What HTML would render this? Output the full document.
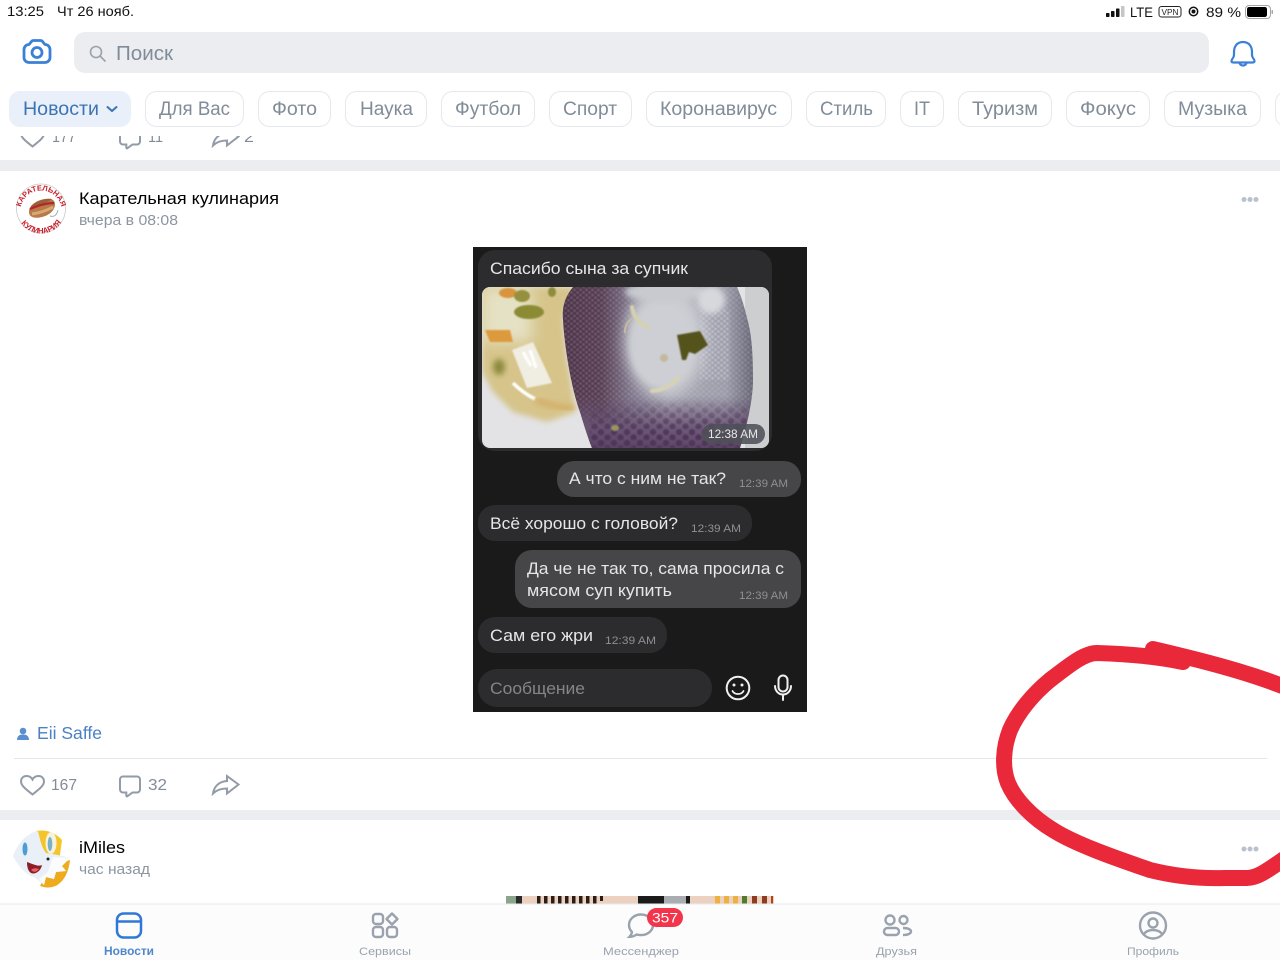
<!DOCTYPE html>
<html lang="ru"><head><meta charset="utf-8"><title>Новости</title>
<style>
html,body{margin:0;padding:0;background:#fff;width:1280px;height:960px;overflow:hidden}
svg{display:block;filter:blur(.3px)}
text{font-family:"Liberation Sans","Noto Sans CJK JP",sans-serif}
.chip{font-size:19px;fill:#818c99}
.chipbox{fill:#fff;stroke:#e6e8eb;stroke-width:1}
.st{font-size:14px;fill:#111}
.chat{font-size:17px;fill:#e6e6e6}
.tm{font-size:11px;fill:#8f8f92}
.sub{font-size:15px;fill:#8c96a2}
.name{font-size:17px;fill:#000}
.ct{font-size:16px;fill:#828c98}
.tab{font-size:11px;fill:#99a2ad}
.ic{fill:none;stroke:#929ba6;stroke-width:2}
.tic{fill:none;stroke:#99a2ad;stroke-width:2.4}
</style></head><body>
<svg width="1280" height="960" viewBox="0 0 1280 960" xmlns="http://www.w3.org/2000/svg">
<defs>
<filter id="b1" x="-30%" y="-30%" width="160%" height="160%"><feGaussianBlur stdDeviation="0.7"/></filter>
<filter id="b3" x="-30%" y="-30%" width="160%" height="160%"><feGaussianBlur stdDeviation="3"/></filter>
<filter id="b6" x="-40%" y="-40%" width="180%" height="180%"><feGaussianBlur stdDeviation="7"/></filter>
<clipPath id="ph"><rect x="482" y="287" width="287" height="161" rx="8"/></clipPath>
<clipPath id="av1"><circle cx="41" cy="208.500" r="24.500"/></clipPath>
<clipPath id="sp"><path d="M573 287C564 298 562 308 563 320C564 340 570 385 580 412C584 425 588 438 592 448H740C747 425 753 400 753 380C753 355 752 335 747 318C744 305 741 296 737 287Z"/></clipPath>
<linearGradient id="spH" x1="563" x2="755" y1="0" y2="0" gradientUnits="userSpaceOnUse">
<stop offset="0" stop-color="#4a2f44"/><stop offset=".2" stop-color="#54394f"/><stop offset=".36" stop-color="#7d748a"/><stop offset=".55" stop-color="#a6a6b2"/><stop offset=".85" stop-color="#9a9aa8"/><stop offset="1" stop-color="#605e6e"/>
</linearGradient>
<linearGradient id="spV" x1="0" x2="0" y1="395" y2="448" gradientUnits="userSpaceOnUse">
<stop offset="0" stop-color="#6a5574" stop-opacity="0"/><stop offset=".6" stop-color="#6a5574" stop-opacity=".9"/><stop offset="1" stop-color="#5c4565"/>
</linearGradient>
<linearGradient id="fadeV" x1="0" x2="0" y1="400" y2="435" gradientUnits="userSpaceOnUse"><stop offset="0" stop-color="#000"/><stop offset="1" stop-color="#fff"/></linearGradient>
<mask id="mB" maskUnits="userSpaceOnUse" x="555" y="287" width="205" height="161"><rect x="555" y="287" width="205" height="161" fill="url(#fadeV)"/></mask>
<pattern id="dots" width="6" height="5.200" patternUnits="userSpaceOnUse"><circle cx="1.500" cy="1.300" r="1.300" fill="#e4e4ec"/><circle cx="4.500" cy="3.900" r="1.300" fill="#e4e4ec"/></pattern>
<pattern id="dotsB" width="13" height="11" patternUnits="userSpaceOnUse"><circle cx="3" cy="3" r="3.200" fill="#50345a"/><circle cx="9.500" cy="8.500" r="3.200" fill="#50345a"/></pattern>
<path id="arcT" d="M20.500 211a20.500 20.500 0 0 1 41 0"/>
<path id="arcB" d="M17 210a24 23.500 0 0 0 48 0"/>
</defs>
<rect width="1280" height="960" fill="#fff"/>

<!-- clipped previous post actions -->
<g transform="translate(0,-648)">
<path class="ic" d="M32.500 794.500C27 790 21 786 21 781.500C21 778 23.500 776 26.500 776C29 776 31.300 777.300 32.500 779.500C33.700 777.300 36 776 38.500 776C41.500 776 44 778 44 781.500C44 786 38 790 32.500 794.500Z"/>
<path class="ic" d="M123 776.500h14a3 3 0 0 1 3 3v10a3 3 0 0 1-3 3h-4.500l-5 3.700c-.7.4-1.200 0-1.200-.7v-3h-3.300a3 3 0 0 1-3-3v-10a3 3 0 0 1 3-3z"/>
<path class="ic" d="M227 776l11.500 8.500-11.500 9v-5c-5 0-10 1-14 5c1-7 6-12 14-12.500z"/>
<text class="ct" x="52" y="790" textLength="24" lengthAdjust="spacingAndGlyphs">177</text>
<text class="ct" x="148" y="790" textLength="15" lengthAdjust="spacingAndGlyphs">11</text>
<text class="ct" x="244" y="790" textLength="10" lengthAdjust="spacingAndGlyphs">2</text>
</g>

<!-- header -->
<rect width="1280" height="136" fill="#fff"/>
<text class="st" x="7" y="16" textLength="37" lengthAdjust="spacingAndGlyphs">13:25</text>
<text class="st" x="57" y="16" textLength="77" lengthAdjust="spacingAndGlyphs">Чт 26 нояб.</text>
<g fill="#111">
<rect x="1106" y="13" width="3.500" height="4" rx=".7"/><rect x="1111" y="11" width="3.500" height="6" rx=".7"/><rect x="1116" y="8.500" width="3.500" height="8.500" rx=".7"/><rect x="1121" y="6" width="3.500" height="11" rx=".7" fill="#c6c6c8"/>
</g>
<text class="st" x="1130" y="17" textLength="23" lengthAdjust="spacingAndGlyphs">LTE</text>
<rect x="1159" y="6.500" width="22" height="10.500" rx="2.500" fill="none" stroke="#222" stroke-width="1"/>
<text x="1161.500" y="15" font-size="8.500" fill="#222" textLength="17" lengthAdjust="spacingAndGlyphs">VPN</text>
<circle cx="1193.500" cy="11.500" r="4.200" fill="none" stroke="#111" stroke-width="1.500"/><circle cx="1193.500" cy="11.500" r="2" fill="#111"/>
<text class="st" x="1206" y="17" textLength="35" lengthAdjust="spacingAndGlyphs">89 %</text>
<rect x="1245.500" y="5.500" width="25" height="13" rx="3.500" fill="none" stroke="#a6a6a8" stroke-width="1"/>
<rect x="1247" y="7" width="20" height="10" rx="2.200" fill="#000"/>
<rect x="1271.500" y="10" width="1.500" height="4" rx=".7" fill="#a6a6a8"/>

<path d="M29 44.500L31.500 41.500Q32 40.500 33.500 40.500H40.500Q42 40.500 42.500 41.500L45 44.500A5 5 0 0 1 50 49.500V57.500A5 5 0 0 1 45 62.500H29A5 5 0 0 1 24 57.500V49.500A5 5 0 0 1 29 44.500Z" fill="none" stroke="#3a80d8" stroke-width="2.800" stroke-linejoin="round"/>
<circle cx="37" cy="52.500" r="5" fill="none" stroke="#3a80d8" stroke-width="2.800"/>
<rect x="74" y="32" width="1135" height="41" rx="11" fill="#ebedf0"/>
<circle cx="96" cy="52" r="5.500" fill="none" stroke="#99a2ad" stroke-width="1.600"/><path d="M100 56l5 5" stroke="#99a2ad" stroke-width="1.600" stroke-linecap="round"/>
<text x="116" y="60" font-size="20" fill="#818c99" textLength="57" lengthAdjust="spacingAndGlyphs">Поиск</text>
<path d="M1243 42c-6 0-9 4.500-9 10v3c0 3-2.500 4-2.500 6c0 1 .8 1.500 2 1.500h19c1.200 0 2-.5 2-1.500c0-2-2.500-3-2.500-6v-3c0-5.500-3-10-9-10z" fill="none" stroke="#3a80d8" stroke-width="2.200"/>
<path d="M1239.500 62.500a3.500 3 0 0 0 7 0" fill="none" stroke="#3a80d8" stroke-width="2.200"/>

<rect x="9" y="91" width="122" height="36" rx="11" fill="#e9f0f9"/>
<text x="23" y="115" font-size="19" fill="#3c73b4" textLength="76" lengthAdjust="spacingAndGlyphs">Новости</text>
<path d="M107.500 107l4.500 4 4.500-4" fill="none" stroke="#3c73b4" stroke-width="2" stroke-linecap="round" stroke-linejoin="round"/>
<rect class="chipbox" x="145.500" y="91.500" width="98" height="35" rx="11"/><text class="chip" x="159" y="115" textLength="71" lengthAdjust="spacingAndGlyphs">Для Вас</text>
<rect class="chipbox" x="258.500" y="91.500" width="72" height="35" rx="11"/><text class="chip" x="272" y="115" textLength="45" lengthAdjust="spacingAndGlyphs">Фото</text>
<rect class="chipbox" x="345.500" y="91.500" width="81" height="35" rx="11"/><text class="chip" x="360" y="115" textLength="53" lengthAdjust="spacingAndGlyphs">Наука</text>
<rect class="chipbox" x="441.500" y="91.500" width="93" height="35" rx="11"/><text class="chip" x="455" y="115" textLength="66" lengthAdjust="spacingAndGlyphs">Футбол</text>
<rect class="chipbox" x="549.500" y="91.500" width="82" height="35" rx="11"/><text class="chip" x="563" y="115" textLength="54" lengthAdjust="spacingAndGlyphs">Спорт</text>
<rect class="chipbox" x="646.500" y="91.500" width="145" height="35" rx="11"/><text class="chip" x="660" y="115" textLength="117" lengthAdjust="spacingAndGlyphs">Коронавирус</text>
<rect class="chipbox" x="806.500" y="91.500" width="79" height="35" rx="11"/><text class="chip" x="820" y="115" textLength="53" lengthAdjust="spacingAndGlyphs">Стиль</text>
<rect class="chipbox" x="900.500" y="91.500" width="43" height="35" rx="11"/><text class="chip" x="914" y="115" textLength="16" lengthAdjust="spacingAndGlyphs">IT</text>
<rect class="chipbox" x="958.500" y="91.500" width="93" height="35" rx="11"/><text class="chip" x="972" y="115" textLength="66" lengthAdjust="spacingAndGlyphs">Туризм</text>
<rect class="chipbox" x="1066.500" y="91.500" width="83" height="35" rx="11"/><text class="chip" x="1080" y="115" textLength="56" lengthAdjust="spacingAndGlyphs">Фокус</text>
<rect class="chipbox" x="1164.500" y="91.500" width="96" height="35" rx="11"/><text class="chip" x="1178" y="115" textLength="69" lengthAdjust="spacingAndGlyphs">Музыка</text>
<rect class="chipbox" x="1275.500" y="91.500" width="40" height="35" rx="11"/>

<rect x="0" y="160" width="1280" height="11" fill="#ebedf0"/>

<!-- post 1 header -->
<circle cx="41" cy="208.500" r="24.500" fill="#fff" stroke="#c9c9c9" stroke-width=".8"/>
<g clip-path="url(#av1)">
<path d="M29 212C29 205 37 200 45 199C51 198 55 200 55 204C55 210 50 215 42 217C34 219 29 217 29 212Z" fill="#b87a48"/>
<path d="M31 206C37 201 45 198 52 199C49 202 39 205 31 210Z" fill="#9a6038"/>
<path d="M30 209C37 206 45 203 54 203" stroke="#b3262c" stroke-width="2.200" fill="none"/>
<path d="M32 214C39 213 46 211 53 207" stroke="#d9a874" stroke-width="3" fill="none"/>
<path d="M50 216q6 2 8-6" stroke="#aaa" stroke-width="1" fill="none"/>
</g>
<text font-size="7.500" font-weight="bold" fill="#c8202c"><textPath href="#arcT" startOffset="4" textLength="56" lengthAdjust="spacingAndGlyphs">КАРАТЕЛЬНАЯ</textPath></text>
<text font-size="8" font-weight="bold" fill="#c8202c"><textPath href="#arcB" startOffset="14" textLength="47" lengthAdjust="spacingAndGlyphs">КУЛИНАРИЯ</textPath></text>
<text class="name" x="79" y="204" textLength="200" lengthAdjust="spacingAndGlyphs">Карательная кулинария</text>
<text class="sub" x="79" y="225" textLength="99" lengthAdjust="spacingAndGlyphs">вчера в 08:08</text>
<g fill="#b8c1cc"><circle cx="1244" cy="199.500" r="2.500"/><circle cx="1250" cy="199.500" r="2.500"/><circle cx="1256" cy="199.500" r="2.500"/></g>

<!-- chat image -->
<rect x="473" y="247" width="334" height="465" fill="#1a1a1b"/>
<rect x="478" y="250" width="294" height="201" rx="17" fill="#2c2c2e"/>
<text class="chat" x="490" y="274" textLength="198" lengthAdjust="spacingAndGlyphs">Спасибо сына за супчик</text>
<g clip-path="url(#ph)">
<rect x="482" y="287" width="287" height="161" fill="#e3e3e6"/>
<rect x="745" y="287" width="24" height="161" fill="#cdced0"/>
<path d="M482 287H575L563 318L567 358L576 412L547 422L513 412L493 392L482 372Z" fill="#d6c48a" filter="url(#b3)"/>
<rect x="482" y="287" width="50" height="55" fill="#e5e1c4" filter="url(#b6)"/>
<ellipse cx="508" cy="293" rx="9" ry="5" fill="#d9943c" filter="url(#b1)"/>
<ellipse cx="522" cy="296" rx="8" ry="6" fill="#94903e" filter="url(#b1)"/>
<ellipse cx="529" cy="312" rx="15" ry="7" fill="#8b8a35" filter="url(#b1)"/>
<ellipse cx="552" cy="292" rx="4" ry="5" fill="#8f8c3e" filter="url(#b1)"/>
<path d="M485 330H510L513 342L500 342L490 342Z" fill="#dd9a3e" filter="url(#b1)"/>
<ellipse cx="499" cy="367" rx="6" ry="8" fill="#8c8a3e" filter="url(#b3)"/>
<path d="M512 350L533 342L552 383L527 388Z" fill="#f0eee2" filter="url(#b1)"/>
<path d="M523 352l8 14M530 350l6 18" stroke="#fff" stroke-width="3" filter="url(#b1)"/>
<path d="M513 383q10 10 22 16" stroke="#fff" stroke-width="3.500" fill="none" filter="url(#b1)"/>
<path d="M536 400q20 8 38 8" stroke="#d4ae68" stroke-width="6" fill="none" filter="url(#b3)"/>
<g clip-path="url(#sp)">
<rect x="555" y="287" width="205" height="161" fill="url(#spH)"/>
<rect x="555" y="287" width="205" height="161" fill="url(#dots)" opacity=".28" filter="url(#b1)"/>
<rect x="555" y="395" width="205" height="53" fill="url(#spV)"/>
<rect x="590" y="400" width="160" height="48" fill="url(#dotsB)" mask="url(#mB)" filter="url(#b1)"/>
<ellipse cx="665" cy="340" rx="40" ry="56" fill="#cbcdd2" filter="url(#b6)"/>
<ellipse cx="662" cy="345" rx="32" ry="42" fill="#cdcfd4" filter="url(#b3)"/>
<ellipse cx="665" cy="292" rx="40" ry="10" fill="#c8cad0" filter="url(#b3)"/>
<ellipse cx="711" cy="300" rx="14" ry="14" fill="#d6d8dc" filter="url(#b3)"/>
<rect x="700" y="310" width="30" height="70" fill="url(#dots)" opacity=".4" filter="url(#b1)"/>
</g>
<path d="M632 307q2 14 16 20" stroke="#d6d0b0" stroke-width="4" fill="none" stroke-linecap="round" filter="url(#b1)"/>
<path d="M631 319q-7 6-6 14" stroke="#c4bda0" stroke-width="1.800" fill="none"/>
<path d="M677 335L700 331L708 345L695 354L689 352L686 360L682 360Z" fill="#54521f" filter="url(#b1)"/>
<path d="M652 391q15-1 26-13" stroke="#d8d2b4" stroke-width="4" fill="none" stroke-linecap="round" filter="url(#b1)"/>
<circle cx="664" cy="358" r="4" fill="#c5b7a0" filter="url(#b1)"/>
<ellipse cx="615" cy="428" rx="4" ry="3" fill="#9a9460" filter="url(#b1)"/>
</g>
<rect x="702" y="424" width="63" height="20" rx="10" fill="#4e5058" opacity=".88"/>
<text x="708" y="438" font-size="11.500" fill="#e8e8e8" textLength="50" lengthAdjust="spacingAndGlyphs">12:38 AM</text>

<rect x="557" y="461" width="244" height="36" rx="17" fill="#464648"/>
<text class="chat" x="569" y="484" textLength="157" lengthAdjust="spacingAndGlyphs">А что с ним не так?</text>
<text class="tm" x="739" y="487" textLength="49" lengthAdjust="spacingAndGlyphs">12:39 AM</text>

<rect x="478" y="505" width="274" height="36" rx="17" fill="#2c2c2e"/>
<text class="chat" x="490" y="529" textLength="188" lengthAdjust="spacingAndGlyphs">Всё хорошо с головой?</text>
<text class="tm" x="691" y="532" textLength="50" lengthAdjust="spacingAndGlyphs">12:39 AM</text>

<rect x="515" y="550" width="286" height="58" rx="17" fill="#464648"/>
<text class="chat" x="527" y="574" textLength="257" lengthAdjust="spacingAndGlyphs">Да че не так то, сама просила с</text>
<text class="chat" x="527" y="596" textLength="145" lengthAdjust="spacingAndGlyphs">мясом суп купить</text>
<text class="tm" x="739" y="599" textLength="49" lengthAdjust="spacingAndGlyphs">12:39 AM</text>

<rect x="478" y="617" width="189" height="36" rx="17" fill="#2c2c2e"/>
<text class="chat" x="490" y="641" textLength="103" lengthAdjust="spacingAndGlyphs">Сам его жри</text>
<text class="tm" x="605" y="644" textLength="51" lengthAdjust="spacingAndGlyphs">12:39 AM</text>

<rect x="478" y="669" width="234" height="38" rx="19" fill="#2c2c2e"/>
<text x="490" y="694" font-size="17" fill="#858587" textLength="95" lengthAdjust="spacingAndGlyphs">Сообщение</text>
<circle cx="738" cy="688" r="11.300" fill="none" stroke="#f0f0f0" stroke-width="2"/>
<circle cx="734" cy="685" r="1.500" fill="#f0f0f0"/><circle cx="742" cy="685" r="1.500" fill="#f0f0f0"/>
<path d="M732.500 691a6 5 0 0 0 11 0" fill="none" stroke="#f0f0f0" stroke-width="1.800" stroke-linecap="round"/>
<rect x="778.500" y="675.500" width="9" height="16" rx="4.500" fill="none" stroke="#f0f0f0" stroke-width="2"/>
<path d="M775 686a8 8.500 0 0 0 16 0M783 695v5" fill="none" stroke="#f0f0f0" stroke-width="2" stroke-linecap="round"/>

<!-- author + actions -->
<circle cx="23" cy="731" r="3.300" fill="#5a8fd0"/><path d="M17 740c0-4 2.500-5.500 6-5.500s6 1.500 6 5.500z" fill="#5a8fd0"/>
<text x="37" y="739" font-size="17.500" fill="#4a80c4" textLength="65" lengthAdjust="spacingAndGlyphs">Eii Saffe</text>
<rect x="14" y="758" width="1253" height="1" fill="#e4e6e9"/>
<path class="ic" d="M32.500 794.500C27 790 21 786 21 781.500C21 778 23.500 776 26.500 776C29 776 31.300 777.300 32.500 779.500C33.700 777.300 36 776 38.500 776C41.500 776 44 778 44 781.500C44 786 38 790 32.500 794.500Z"/>
<text class="ct" x="51" y="790" textLength="26" lengthAdjust="spacingAndGlyphs">167</text>
<path class="ic" d="M123 776.500h14a3 3 0 0 1 3 3v10a3 3 0 0 1-3 3h-4.500l-5 3.700c-.7.4-1.200 0-1.200-.7v-3h-3.300a3 3 0 0 1-3-3v-10a3 3 0 0 1 3-3z"/>
<text class="ct" x="148" y="790" textLength="19" lengthAdjust="spacingAndGlyphs">32</text>
<path class="ic" d="M227 776l11.500 8.500-11.500 9v-5c-5 0-10 1-14 5c1-7 6-12 14-12.500z"/>

<rect x="0" y="810" width="1280" height="10" fill="#ebedf0"/>

<!-- post 2 avatar -->
<path d="M36 831C46 829 56 833 62 840L59 862L38 852Z" fill="#f3c52a"/>
<path d="M40 886C56 892 68 880 70 860L50 866Z" fill="#efab1e"/>
<path d="M13 856C18 843 27 833 38 831C40 840 42 848 46 853L58 855L70 858L62 866L66 871L56 872L54 879L46 877L44 885L38 880L34 877C26 875 18 866 13 856Z" fill="#e9f0f7"/>
<path d="M53 857L70 858L62 866L66 871L56 872L54 879L46 877L44 885L39 879L48 872Z" fill="#fbfcfd"/>
<ellipse cx="25" cy="848" rx="4" ry="9" fill="#e6eff6"/>
<ellipse cx="25" cy="849" rx="2.500" ry="6.500" fill="#4d9cd6"/>
<ellipse cx="51" cy="843" rx="5.500" ry="11" fill="#f6f2dc"/>
<ellipse cx="50" cy="844" rx="2.300" ry="7" fill="#7ab0c8"/>
<circle cx="48" cy="859" r="1.500" fill="#222"/>
<path d="M27 862C33 864 38 867 42 865C41 871 35 875 31 873C28 871 27 867 27 862Z" fill="#8e1d25"/>
<path d="M31 870q3-3 8-1q-4 5-8 1z" fill="#e8606a"/>
<text class="name" x="79" y="853" textLength="46" lengthAdjust="spacingAndGlyphs">iMiles</text>
<text class="sub" x="79" y="874" textLength="71" lengthAdjust="spacingAndGlyphs">час назад</text>
<g fill="#b8c1cc"><circle cx="1244" cy="849" r="2.500"/><circle cx="1250" cy="849" r="2.500"/><circle cx="1256" cy="849" r="2.500"/></g>

<rect x="506" y="896" width="268" height="8" fill="#ecd0c0"/>
<rect x="506" y="896" width="10" height="8" fill="#8ba58d"/><rect x="516" y="896" width="6" height="8" fill="#2a2a28"/>
<g fill="#2a1d18"><rect x="537" y="896" width="3.500" height="8"/><rect x="544" y="896" width="3.500" height="8"/><rect x="551" y="896" width="3.500" height="8"/><rect x="558" y="896" width="3.500" height="8"/><rect x="565" y="896" width="3.500" height="8"/><rect x="572" y="896" width="3.500" height="8"/><rect x="579" y="896" width="3.500" height="8"/><rect x="586" y="896" width="3.500" height="8"/><rect x="593" y="896" width="3.500" height="8"/><rect x="600" y="896" width="3" height="5"/></g>
<rect x="638" y="896" width="52" height="8" fill="#1b1b1b"/><rect x="664" y="896" width="22" height="8" fill="#a9adb2"/>
<g fill="#eeb040"><rect x="715" y="896" width="5" height="8"/><rect x="724" y="896" width="5" height="8"/><rect x="733" y="896" width="5" height="8"/></g>
<rect x="742" y="896" width="5" height="8" fill="#4f7d30"/><rect x="752" y="896" width="5" height="8" fill="#8e3c20"/><rect x="762" y="896" width="5" height="8" fill="#8e3c20"/><rect x="771" y="896" width="2" height="8" fill="#b04020"/>

<!-- tab bar -->
<rect x="0" y="904" width="1280" height="56" fill="#fcfcfd"/>
<rect x="0" y="903.500" width="1280" height="1" fill="#e9eaec"/>
<rect x="117" y="913.500" width="24" height="24" rx="6.500" fill="none" stroke="#2f78d6" stroke-width="2.500"/>
<path d="M117 921.500h24" stroke="#2f78d6" stroke-width="2.500"/>
<text x="104" y="955" font-size="11.500" font-weight="bold" fill="#4f86cc" textLength="50" lengthAdjust="spacingAndGlyphs">Новости</text>

<rect class="tic" x="373" y="914" width="10" height="10" rx="3"/>
<rect class="tic" x="373" y="927" width="10" height="10" rx="3"/>
<rect class="tic" x="387" y="927" width="10" height="10" rx="3"/>
<path class="tic" d="M392 913.500l5.500 5.500-5.500 5.500-5.500-5.500z" stroke-linejoin="round"/>
<text class="tab" x="359" y="955" textLength="52" lengthAdjust="spacingAndGlyphs">Сервисы</text>

<path class="tic" d="M641 914.500c-6.500 0-12 4.500-12 10.500c0 2.800 1 5 3 7c-.3 2-1.500 3.800-2.500 4.800c2.500 0 5-.7 7-2.300c1.400.4 2.900.6 4.500.6c6.500 0 12-4.500 12-10.100c0-6-5.500-10.500-12-10.500z"/>
<rect x="647" y="908" width="36" height="19" rx="9.500" fill="#f2354a"/>
<text x="652" y="922.500" font-size="14" fill="#fff" textLength="26" lengthAdjust="spacingAndGlyphs">357</text>
<text class="tab" x="603" y="955" textLength="76" lengthAdjust="spacingAndGlyphs">Мессенджер</text>

<circle class="tic" cx="890" cy="920" r="4.500"/>
<circle class="tic" cx="903.500" cy="920" r="4"/>
<rect class="tic" x="884" y="928" width="15" height="7" rx="3.500"/>
<path class="tic" d="M903 928c5 0 8 1.500 8 3.500s-3 3.500-8 3.500"/>
<text class="tab" x="876" y="955" textLength="41" lengthAdjust="spacingAndGlyphs">Друзья</text>

<circle class="tic" cx="1153" cy="925.500" r="13"/>
<circle class="tic" cx="1153" cy="923" r="4.500"/>
<path class="tic" d="M1143.500 934.500c2-3 5.500-4.500 9.500-4.500s7.500 1.500 9.500 4.500"/>
<text class="tab" x="1127" y="955" textLength="52" lengthAdjust="spacingAndGlyphs">Профиль</text>

<!-- red marker -->
<g fill="none" stroke="#e9283a" stroke-width="16" stroke-linecap="round" stroke-linejoin="round">
<path d="M1290 689C1260 677 1226 666 1153 649"/>
<path d="M1183 662C1160 657 1130 654 1097 653C1085 653 1072 663 1050 680C1033 694 1018 712 1010 730C1003 748 1002 768 1008 783C1015 800 1033 818 1053 830C1075 844 1115 858 1150 870C1170 875 1195 879 1225 878L1247 878C1258 878 1268 870 1290 855"/>
</g>
</svg>
</body></html>
